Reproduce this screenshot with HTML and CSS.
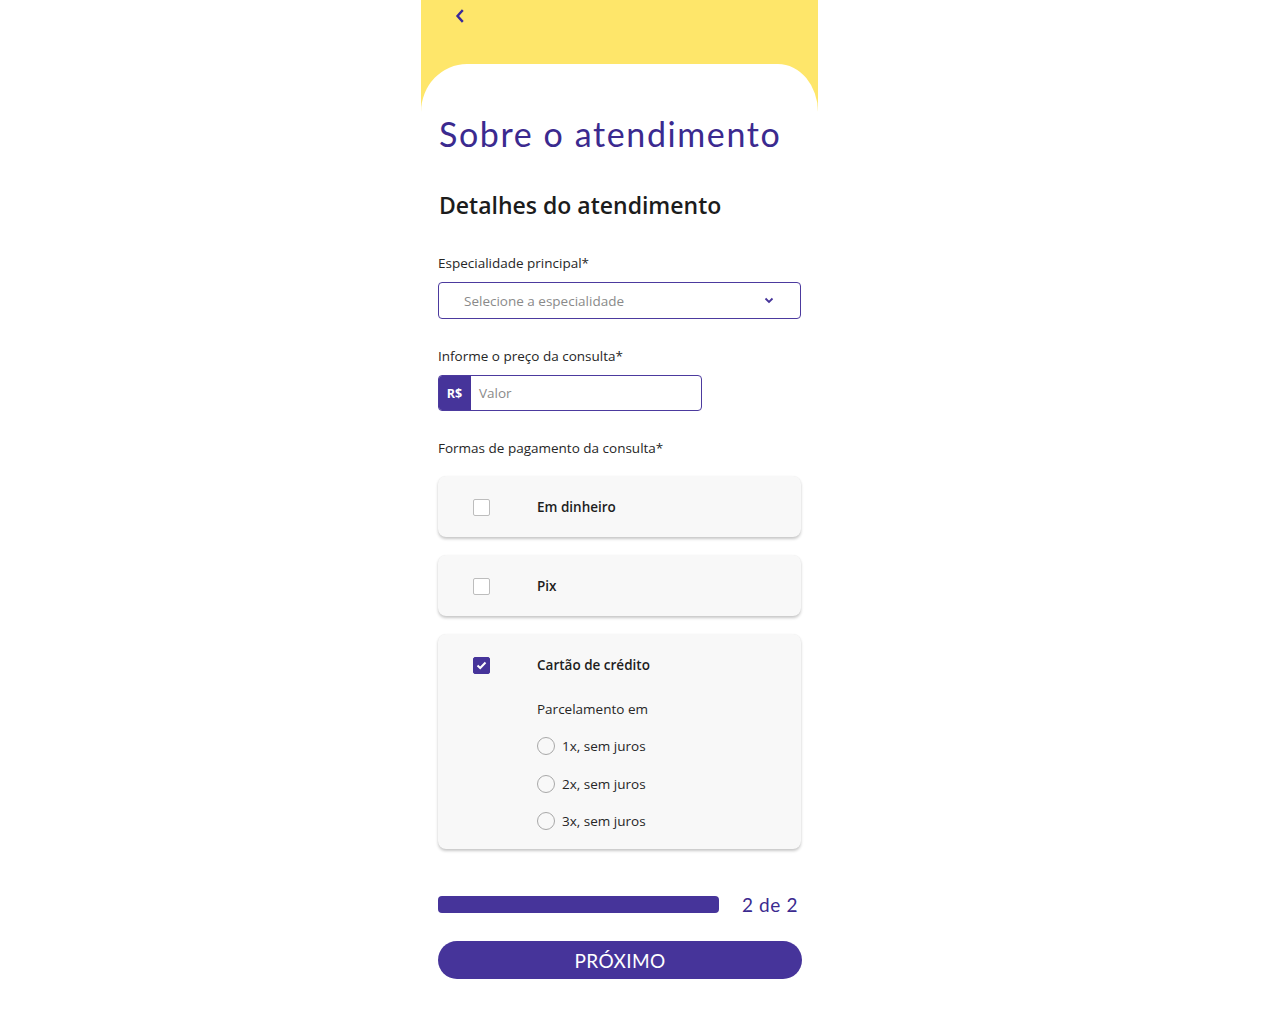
FILE: index.html
```html
<!DOCTYPE html>
<html lang="pt-BR">
<head>
<meta charset="utf-8">
<title>Sobre o atendimento</title>
<link rel="stylesheet" href="styles.css">
</head>
<body>
<div class="phone">
  <header class="top">
    <button class="back" aria-label="Voltar">
      <svg width="10" height="14" viewBox="0 0 10 14"><path d="M7 2 L2.5 7 L7 12" fill="none" stroke="#3a2a9a" stroke-width="2.4" stroke-linecap="square" stroke-linejoin="miter"/></svg>
    </button>
  </header>
  <main class="sheet">
    <h1 class="title">Sobre o atendimento</h1>
    <h2 class="subtitle">Detalhes do atendimento</h2>

    <div class="field">
      <label class="label">Especialidade principal*</label>
      <div class="select">
        <span class="placeholder">Selecione a especialidade</span>
        <svg class="chev" width="10" height="7" viewBox="0 0 10 7"><path d="M1.5 1.5 L5 5 L8.5 1.5" fill="none" stroke="#46349a" stroke-width="1.8"/></svg>
      </div>
    </div>

    <div class="field">
      <label class="label">Informe o preço da consulta*</label>
      <div class="price">
        <span class="prefix">R$</span>
        <span class="placeholder">Valor</span>
      </div>
    </div>

    <div class="field">
      <label class="label">Formas de pagamento da consulta*</label>
      <div class="cards">
        <div class="card">
          <div class="card-row">
            <span class="check"></span>
            <span class="card-text">Em dinheiro</span>
          </div>
        </div>
        <div class="card">
          <div class="card-row">
            <span class="check"></span>
            <span class="card-text">Pix</span>
          </div>
        </div>
        <div class="card">
          <div class="card-row">
            <span class="check checked">
              <svg width="11" height="9" viewBox="0 0 11 9"><path d="M1.5 4.5 L4.2 7 L9.5 1.5" fill="none" stroke="#fff" stroke-width="2"/></svg>
            </span>
            <span class="card-text">Cartão de crédito</span>
          </div>
          <div class="sub">
            <div class="sub-title">Parcelamento em</div>
            <ul class="radios">
              <li class="radio"><span class="circle"></span>1x, sem juros</li>
              <li class="radio"><span class="circle"></span>2x, sem juros</li>
              <li class="radio"><span class="circle"></span>3x, sem juros</li>
            </ul>
          </div>
        </div>
      </div>
    </div>

    <div class="progress">
      <div class="bar"></div>
      <span class="step">2 de 2</span>
    </div>

    <button class="next">PRÓXIMO</button>
  </main>
</div>
</body>
</html>
```

FILE: styles.css
```css
* { box-sizing: border-box; }
html, body { margin: 0; padding: 0; background: #fff; }
body { font-family: "Open Sans", "Noto Sans", sans-serif; color: #222; }

.phone {
  width: 397px;
  margin-left: 421px;
  min-height: 1015px;
  background: #fee66a;
  display: flex;
  flex-direction: column;
}

.top {
  height: 64px;
  padding: 7px 0 0 32px;
}
.back {
  border: 0;
  background: none;
  padding: 0;
  width: 14px;
  height: 18px;
  display: flex;
  align-items: center;
  justify-content: center;
}

.sheet {
  flex: 1;
  background: #fff;
  border-radius: 46px 40px 0 0 / 48px 48px 0 0;
  padding: 50px 17px 0 17px;
  display: flex;
  flex-direction: column;
}

.title {
  margin: 0 0 0 1px;
  font-family: "Lato", sans-serif;
  font-weight: 400;
  font-size: 34px;
  line-height: 40px;
  letter-spacing: 1.6px;
  color: #3b2a8f;
}

.subtitle {
  margin: 35px 0 0 1px;
  font-size: 23px;
  line-height: 32px;
  font-weight: 600;
  color: #1c1c1c;
}

.field { display: flex; flex-direction: column; }
.field:nth-of-type(1) { margin-top: 32px; }
.field + .field { margin-top: 27px; }
.field:last-of-type { margin-top: 28px; }

.label {
  font-size: 13.5px;
  line-height: 20px;
  color: #262626;
  margin-bottom: 9px;
}

.select {
  height: 37px;
  border: 1.5px solid #4c3a9e;
  border-radius: 4px;
  display: flex;
  align-items: center;
  justify-content: space-between;
  padding: 0 26px 0 25px;
}
.placeholder { font-size: 13.5px; color: #8a8a8a; }

.price {
  width: 264px;
  height: 36px;
  border: 1.5px solid #4c3a9e;
  border-radius: 4px;
  display: flex;
  align-items: stretch;
  overflow: hidden;
}
.prefix {
  width: 33px;
  background: #46349a;
  color: #fff;
  font-size: 12.5px;
  font-weight: 700;
  display: flex;
  align-items: center;
  justify-content: center;
  margin-left: -1px;
}
.price .placeholder {
  display: flex;
  align-items: center;
  padding-left: 8px;
}

.cards {
  display: flex;
  flex-direction: column;
  gap: 18px;
  margin-top: 9px;
}
.card {
  background: #f8f8f8;
  border-radius: 8px;
  box-shadow: 0 2px 3px rgba(0,0,0,0.22), 0 0 1px rgba(0,0,0,0.06);
}
.card-row {
  height: 61px;
  display: flex;
  align-items: center;
  padding: 1px 0 0 35px;
}
.check {
  width: 17px;
  height: 17px;
  border: 1.5px solid #bdbdbd;
  border-radius: 2px;
  background: #fff;
  margin-right: 47px;
  display: flex;
  align-items: center;
  justify-content: center;
}
.check.checked {
  background: #46349a;
  border-color: #46349a;
}
.card-text {
  font-size: 13.5px;
  font-weight: 600;
  color: #1e1e1e;
}

.sub {
  padding: 4px 0 17px 99px;
}
.sub-title {
  font-size: 13.5px;
  line-height: 20px;
  color: #262626;
}
.radios {
  list-style: none;
  margin: 16px 0 0;
  padding: 0;
  display: flex;
  flex-direction: column;
  gap: 15.5px;
}
.radio {
  height: 22px;
  display: flex;
  align-items: center;
  font-size: 13.5px;
  color: #262626;
}
.circle {
  width: 18px;
  height: 18px;
  border: 1.5px solid #a8a8a8;
  border-radius: 50%;
  margin-right: 7px;
}

.progress {
  margin-top: 47px;
  display: flex;
  align-items: center;
  height: 17px;
}
.bar {
  width: 281px;
  height: 17px;
  background: #46349a;
  border-radius: 4px;
}
.step {
  margin-left: 23px;
  font-family: "Lato", sans-serif;
  font-size: 19px;
  letter-spacing: 0.6px;
  color: #3b2a8f;
}

.next {
  margin-top: 28px;
  height: 38px;
  width: 364px;
  border: 0;
  border-radius: 19px;
  background: #46349a;
  color: #fff;
  font-family: "Lato", sans-serif;
  font-size: 19px;
  letter-spacing: 0.4px;
  padding: 0;
}
```
